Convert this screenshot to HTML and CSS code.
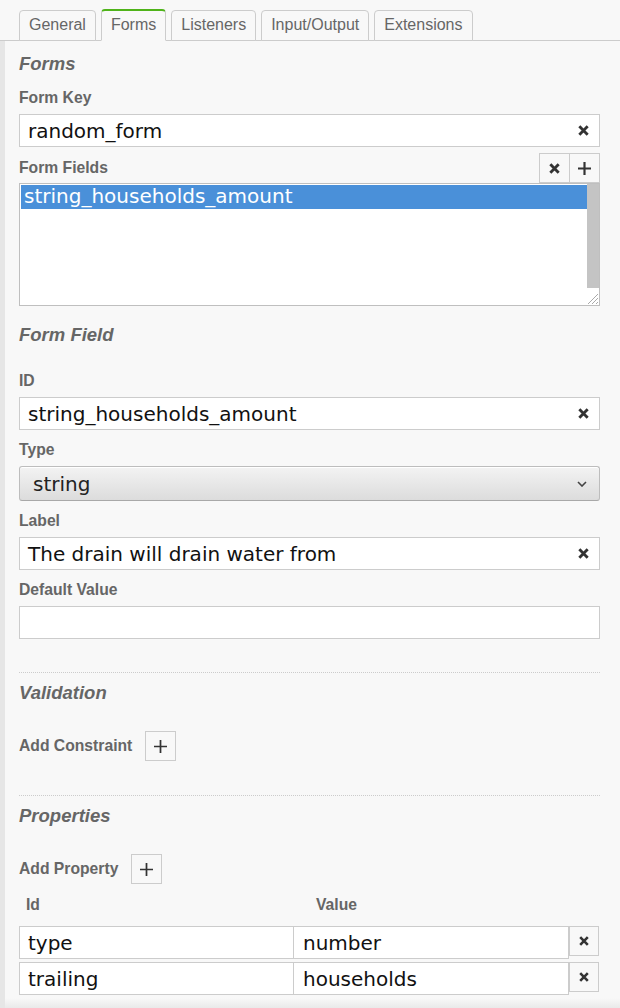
FILE: index.html
```html
<!DOCTYPE html>
<html lang="en">
<head>
<meta charset="utf-8">
<title>Forms</title>
<link rel="stylesheet" href="styles.css">
</head>
<body>
<div class="tabs">
  <div class="tab">General</div>
  <div class="tab active">Forms</div>
  <div class="tab">Listeners</div>
  <div class="tab">Input/Output</div>
  <div class="tab">Extensions</div>
</div>
<div class="panel">
  <h2 class="heading h-forms">Forms</h2>

  <div class="group group-key">
    <div class="lbl">Form Key</div>
    <div class="field"><span class="val">random_form</span><svg class="clear" viewBox="0 0 10 10"><path d="M1.2 1.2L8.8 8.8M8.8 1.2L1.2 8.8"/></svg></div>
  </div>

  <div class="list-head">
    <div class="lbl">Form Fields</div>
    <div class="btns">
      <div class="btn"><svg class="ico-x" viewBox="0 0 10 10"><path d="M1.2 1.2L8.8 8.8M8.8 1.2L1.2 8.8"/></svg></div>
      <div class="btn btn-join"><svg class="ico-plus" viewBox="0 0 12 12"><path d="M6 0V12M0 6H12"/></svg></div>
    </div>
  </div>
  <div class="listbox">
    <div class="list-inner">
      <div class="item sel">string_households_amount</div>
    </div>
    <div class="scrollbar"><div class="thumb"></div></div>
    <svg class="grip" viewBox="0 0 14 14"><path d="M13 3L3 13M13 7L7 13M13 11L11 13"/></svg>
  </div>

  <h2 class="heading h-field">Form Field</h2>

  <div class="group">
    <div class="lbl">ID</div>
    <div class="field"><span class="val">string_households_amount</span><svg class="clear" viewBox="0 0 10 10"><path d="M1.2 1.2L8.8 8.8M8.8 1.2L1.2 8.8"/></svg></div>
  </div>
  <div class="group">
    <div class="lbl">Type</div>
    <div class="select"><span class="val">string</span><svg class="chev" viewBox="0 0 10 6"><path d="M1 1L5 5L9 1"/></svg></div>
  </div>
  <div class="group">
    <div class="lbl">Label</div>
    <div class="field"><span class="val">The drain will drain water from</span><svg class="clear" viewBox="0 0 10 10"><path d="M1.2 1.2L8.8 8.8M8.8 1.2L1.2 8.8"/></svg></div>
  </div>
  <div class="group">
    <div class="lbl">Default Value</div>
    <div class="field"><span class="val"></span></div>
  </div>

  <div class="sep sep-1"></div>
  <h2 class="heading h-sub">Validation</h2>
  <div class="add-row">
    <div class="lbl">Add Constraint</div>
    <div class="btn btn-add"><svg class="ico-plus thin" viewBox="0 0 12 12"><path d="M6 0V12M0 6H12"/></svg></div>
  </div>

  <div class="sep sep-2"></div>
  <h2 class="heading h-sub">Properties</h2>
  <div class="add-row">
    <div class="lbl">Add Property</div>
    <div class="btn btn-add"><svg class="ico-plus thin" viewBox="0 0 12 12"><path d="M6 0V12M0 6H12"/></svg></div>
  </div>

  <div class="prop-head">
    <div class="ph ph-id">Id</div>
    <div class="ph ph-value">Value</div>
  </div>
  <div class="prop-row">
    <div class="cell cell-id">type</div>
    <div class="cell cell-value">number</div>
    <div class="btn btn-del"><svg class="ico-x small" viewBox="0 0 10 10"><path d="M1.2 1.2L8.8 8.8M8.8 1.2L1.2 8.8"/></svg></div>
  </div>
  <div class="prop-row">
    <div class="cell cell-id">trailing</div>
    <div class="cell cell-value">households</div>
    <div class="btn btn-del"><svg class="ico-x small" viewBox="0 0 10 10"><path d="M1.2 1.2L8.8 8.8M8.8 1.2L1.2 8.8"/></svg></div>
  </div>
  <div class="footer"></div>
</div>
</body>
</html>
```

FILE: styles.css
```css
* { box-sizing: border-box; }

html, body {
  margin: 0;
  padding: 0;
  background: #f8f8f8;
  height: 100%;
}

body {
  font-family: "Liberation Sans", Arial, sans-serif;
  color: #666;
  overflow: hidden;
}

/* ---------- tabs ---------- */
.tabs {
  display: flex;
  align-items: flex-end;
  gap: 5px;
  height: 41px;
  padding-left: 19px;
  border-bottom: 1px solid #ccc;
}

.tab {
  height: 31px;
  margin-bottom: -1px;
  padding: 0 9px;
  border: 1px solid #ccc;
  border-radius: 4px 4px 0 0;
  background: #f8f8f8;
  font-size: 16px;
  line-height: 28px;
  color: #666;
}

.tab.active {
  height: 32px;
  border-top: 2px solid #4fb31a;
  border-bottom-color: #f8f8f8;
}

/* ---------- panel ---------- */
.panel {
  border-left: 5px solid #e6e6e6;
  padding: 0 20px 0 14px;
  min-height: calc(100% - 41px);
  display: flex;
  flex-direction: column;
}

.heading {
  margin: 0;
  font-size: 18.5px;
  line-height: 24px;
  font-weight: bold;
  font-style: italic;
  color: #666;
}

.h-forms { margin-top: 11px; margin-bottom: 12px; }
.h-field { margin-top: 17px; margin-bottom: 24px; }
.h-sub   { margin-top: 8px; margin-bottom: 26px; }

.lbl {
  font-size: 15.7px;
  line-height: 20px;
  font-weight: bold;
  color: #666;
}

.group { margin-bottom: 10px; }
.group .lbl { margin-bottom: 6px; }
.group-key { margin-bottom: 6px; }

.field, .select, .cell {
  font-family: "DejaVu Sans", sans-serif;
  font-size: 20px;
  color: #111;
}

.field {
  display: flex;
  align-items: center;
  height: 33px;
  padding: 0 10px 0 8px;
  background: #fff;
  border: 1px solid #ccc;
}

.val {
  flex: 1;
  white-space: nowrap;
  line-height: 32px;
}

.clear, .ico-x {
  width: 11px;
  height: 11px;
  fill: none;
  stroke: #333;
  stroke-width: 2.6;
}

.ico-x.small {
  width: 10px;
  height: 10px;
}

.ico-plus {
  width: 13px;
  height: 13px;
  fill: none;
  stroke: #333;
  stroke-width: 2;
}

.ico-plus.thin { stroke-width: 1.6; }

/* select */
.select {
  display: flex;
  align-items: center;
  height: 35px;
  padding: 0 12px 0 13px;
  border: 1px solid #bdbdbd;
  border-bottom-color: #a8a8a8;
  border-radius: 3px;
  background: linear-gradient(#f3f3f3, #dcdcdc);
  box-shadow: inset 0 1px 0 #fff;
  color: #222;
}

.chev {
  width: 10px;
  height: 6px;
  fill: none;
  stroke: #444;
  stroke-width: 1.6;
}

/* list */
.list-head {
  display: flex;
  align-items: center;
  justify-content: space-between;
  height: 30px;
}

.btns { display: flex; }

.btn {
  display: flex;
  align-items: center;
  justify-content: center;
  width: 31px;
  height: 30px;
  border: 1px solid #ccc;
  background: #f8f8f8;
}

.btn-join { margin-left: -1px; }

.listbox {
  position: relative;
  display: flex;
  height: 123px;
  border: 1px solid #bfbfbf;
  background: #fff;
  padding: 1px 0 0 1px;
}

.list-inner { flex: 1; }

.item {
  height: 24px;
  padding-left: 3px;
  font-family: "DejaVu Sans", sans-serif;
  font-size: 20px;
  line-height: 23px;
  white-space: nowrap;
}

.item.sel {
  background: #4a90d9;
  color: #fff;
}

.scrollbar {
  width: 12px;
  margin-top: -1px;
}

.thumb {
  height: 104px;
  background: #c4c4c4;
}

.grip {
  position: absolute;
  right: 0;
  bottom: 0;
  width: 14px;
  height: 14px;
  fill: none;
  stroke: #aaa;
  stroke-width: 1;
}

/* separators */
.sep {
  height: 0;
  border-top: 1px dotted #ccc;
}

.sep-1 { margin-top: 23px; }
.sep-2 { margin-top: 34px; }

/* add rows */
.add-row {
  display: flex;
  align-items: center;
  gap: 13px;
  height: 30px;
}

.btn-add { width: 31px; height: 30px; }

/* properties */
.prop-head {
  display: flex;
  height: 20px;
  margin-top: 11px;
  margin-bottom: 11px;
  font-size: 15.7px;
  line-height: 20px;
  font-weight: bold;
  color: #666;
}

.ph-id { width: 274px; padding-left: 7px; }
.ph-value { padding-left: 23px; }

.prop-row {
  display: flex;
  align-items: flex-start;
  margin-bottom: 3px;
}

.cell {
  height: 33px;
  padding-left: 8px;
  line-height: 32px;
  background: #fff;
  border: 1px solid #ccc;
  white-space: nowrap;
}

.cell-id { width: 275px; }
.cell-value { width: 276px; margin-left: -1px; padding-left: 9px; }

.btn-del { width: 30px; height: 30px; }

.footer {
  flex: 1;
  min-height: 10px;
  margin: 0 -20px 0 -14px;
  background: linear-gradient(#f8f8f8, #e9e9e9);
}
```
